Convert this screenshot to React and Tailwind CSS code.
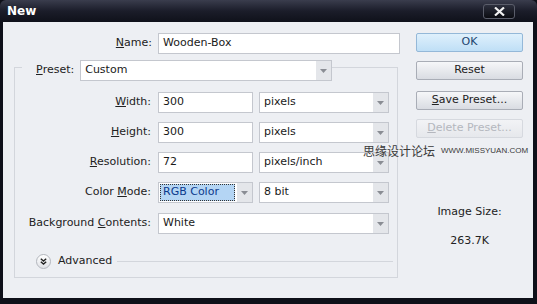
import React from "react";

const font = { fontFamily: '"DejaVu Sans", "Noto Sans CJK SC", sans-serif' };

const Arrow = () => (
  <div className="w-[15px] h-full bg-[#e4e6ea] flex items-center justify-center">
    <svg width="7" height="4" viewBox="0 0 7 4">
      <path d="M0 0 L7 0 L3.5 4 Z" fill="#8a8d94" />
    </svg>
  </div>
);

const Select = ({ value, className = "" }) => (
  <div className={`h-[21px] bg-white border border-[#c4c7ce] flex items-stretch ${className}`}>
    <div className="flex-1 pl-[4px] flex items-center text-[#1a1a1a]">{value}</div>
    <Arrow />
  </div>
);

const Input = ({ value, className = "" }) => (
  <div className={`h-[21px] bg-white border border-[#c4c7ce] pl-[4px] flex items-center text-[#1a1a1a] ${className}`}>
    {value}
  </div>
);

const Btn = ({ children, primary, disabled, className = "" }) => (
  <div
    className={`h-[19px] w-[107px] rounded-[2px] border flex items-center justify-center ${
      primary
        ? "border-[#94b8d8] bg-gradient-to-b from-[#dff0fc] to-[#bfdff6] text-[#23456f]"
        : disabled
        ? "border-[#d6d9df] bg-gradient-to-b from-[#f2f3f6] to-[#e6e8ec] text-[#b4b7be]"
        : "border-[#a9adb6] bg-gradient-to-b from-[#f6f7f9] to-[#d9dce2] text-[#222]"
    } ${className}`}
  >
    {children}
  </div>
);

const Row = ({ label, children }) => (
  <div className="flex items-center h-[21px]">
    <div className="w-[137px] text-right pr-[1px] text-[#222]">{label}</div>
    <div className="ml-[6px] flex items-center gap-[6px]">{children}</div>
  </div>
);

export default function App() {
  return (
    <div className="w-[537px] h-[304px] bg-[#0e1019] flex flex-col text-[11px]" style={font}>
      {/* title bar */}
      <div className="h-[22px] rounded-t-[6px] bg-gradient-to-b from-[#3a3d4d] via-[#1b1d2a] to-[#0f111a] flex items-center justify-between pl-[7px] pr-[22px]">
        <span className="text-white font-bold text-[12px]">New</span>
        <div className="w-[32px] h-[15px] rounded-[3px] border border-[#5a5d6a] bg-gradient-to-b from-[#2d303e] to-[#0b0c12] flex items-center justify-center">
          <svg width="11" height="9" viewBox="0 0 11 9">
            <path d="M1 0.5 L10 8.5 M10 0.5 L1 8.5" stroke="#f2f2f2" strokeWidth="2.2" />
          </svg>
        </div>
      </div>

      {/* body */}
      <div className="relative flex-1 ml-[3px] mr-[4px] mb-[6px] bg-[#edeff3] flex">
        <div className="w-[400px] pt-[11px] flex flex-col">
          {/* name */}
          <div className="flex items-center h-[21px]">
            <div className="w-[149px] text-right text-[#222]">
              <span className="underline">N</span>ame:
            </div>
            <Input value="Wooden-Box" className="ml-[6px] w-[242px]" />
          </div>

          {/* preset + group box */}
          <div className="mt-[6px] ml-[11px] w-[384px]">
            <div className="relative z-10 flex items-center h-[21px]">
              <div className="ml-[8px] pl-[14px] pr-[6px] bg-[#edeff3] text-[#222] h-full flex items-center">
                <span className="underline">P</span>reset:
              </div>
              <Select value="Custom" className="w-[252px]" />
            </div>
            <div className="-mt-[14px] h-[211px] border border-[#d3d6dc] pt-[24px] flex flex-col">
              <div className="flex flex-col gap-[9px]">
                <Row label={<><span className="underline">W</span>idth:</>}>
                  <Input value="300" className="w-[95px]" />
                  <Select value="pixels" className="w-[130px]" />
                </Row>
                <Row label={<><span className="underline">H</span>eight:</>}>
                  <Input value="300" className="w-[95px]" />
                  <Select value="pixels" className="w-[130px]" />
                </Row>
                <Row label={<><span className="underline">R</span>esolution:</>}>
                  <Input value="72" className="w-[95px]" />
                  <Select value="pixels/inch" className="w-[130px]" />
                </Row>
                <Row label={<>Color <span className="underline">M</span>ode:</>}>
                  <div className="w-[95px] h-[21px] bg-white border border-[#c4c7ce] flex items-stretch">
                    <div className="flex-1 m-[1px] mr-[2px] border border-dotted border-[#333] bg-[#b4d5f4] text-[#0c3a8c] pl-[2px] flex items-center">
                      RGB Color
                    </div>
                    <Arrow />
                  </div>
                  <Select value="8 bit" className="w-[130px]" />
                </Row>
                <div className="mt-[1px]">
                  <Row label={<>Background <span className="underline">C</span>ontents:</>}>
                    <Select value="White" className="w-[231px]" />
                  </Row>
                </div>
              </div>

              {/* advanced */}
              <div className="mt-[19px] pl-[21px] flex items-center h-[16px]">
                <div className="w-[15px] h-[15px] rounded-full border border-[#b3b6bd] bg-gradient-to-b from-white to-[#e0e2e7] flex items-center justify-center">
                  <svg width="7" height="7" viewBox="0 0 7 7">
                    <path d="M0.8 0.8 L3.5 3 L6.2 0.8 M0.8 3.8 L3.5 6 L6.2 3.8" stroke="#222" strokeWidth="1.4" fill="none" />
                  </svg>
                </div>
                <span className="ml-[7px] text-[#222]">Advanced</span>
                <div className="ml-[5px] w-[276px] h-px bg-[#d3d6dc]" />
              </div>
            </div>
          </div>
        </div>

        {/* right column */}
        <div className="ml-[13px] pt-[11px] flex flex-col">
          <Btn primary>OK</Btn>
          <Btn className="mt-[9px]">Reset</Btn>
          <Btn className="mt-[11px]">
            <span className="underline">S</span>ave Preset...
          </Btn>
          <Btn disabled className="mt-[9px]">
            <span className="underline">D</span>elete Preset...
          </Btn>
          <div className="mt-[66px] text-center text-[#222]">Image Size:</div>
          <div className="mt-[12px] text-center text-[#222]">263.7K</div>
        </div>

        {/* watermark */}
        <div className="absolute left-[360px] top-[120px] flex items-center gap-[6px] whitespace-nowrap text-[#3a3a3a]">
          <span className="text-[12px]" style={{ fontFamily: '"Noto Sans CJK SC", sans-serif' }}>
            思缘设计论坛
          </span>
          <span className="text-[8px]" style={{ fontFamily: '"Liberation Sans", sans-serif' }}>
            WWW.MISSYUAN.COM
          </span>
        </div>
      </div>
    </div>
  );
}
